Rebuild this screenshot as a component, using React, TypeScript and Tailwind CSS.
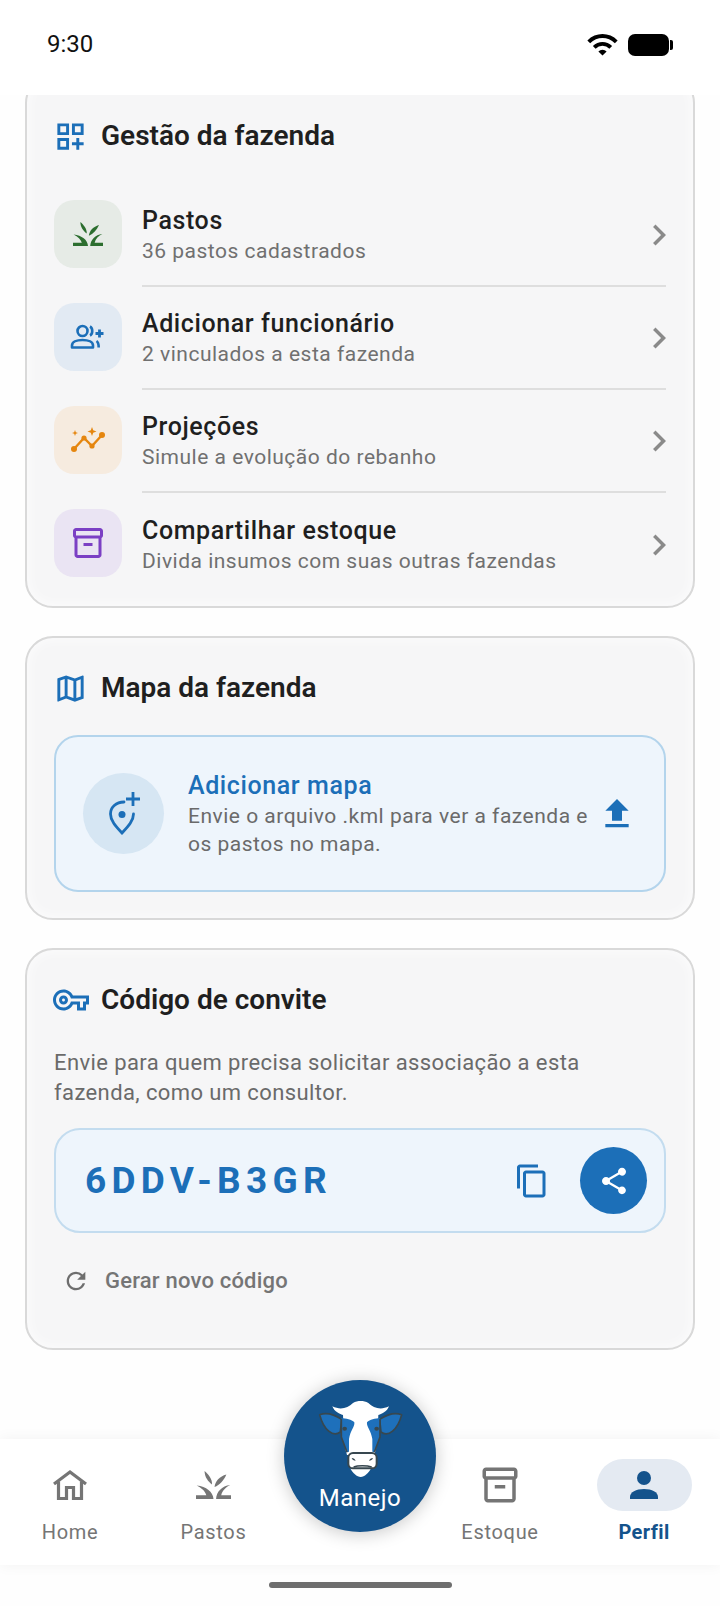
import React from 'react';
import {
  MdChevronRight,
  MdContentCopy,
  MdFileUpload,
  MdOutlineDashboardCustomize,
  MdOutlineInventory2,
  MdOutlineMap,
  MdOutlineVpnKey,
  MdRefresh,
  MdShare,
  MdWifi,
} from 'react-icons/md';

function GrassIcon({ className }: { className?: string }) {
  return (
    <svg viewBox="0 0 34 27" className={className} fill="currentColor">
      <path d="M8.300 0C12 3 16 8 15.500 13 11.500 10 8.500 6 8.300 0z" />
      <path d="M29.500 3.300C23 5 18.500 10 18 15.500 23 13.500 27 9 29.500 3.300z" />
      <path d="M.7 14C10 15 16.500 20 17 27H0v-3.500h10C9 19.500 5.500 16.500.7 14z" />
      <path d="M33.300 13.500C25 14.500 20 20 19.500 27H34v-3.500h-9.500c1-4.500 4.500-8 8.800-10z" />
    </svg>
  );
}

function PersonAddIcon({ className }: { className?: string }) {
  return (
    <svg viewBox="0 0 36 26" className={className} fill="none" stroke="currentColor" strokeWidth="2.600">
      <circle cx="12.500" cy="7" r="5" />
      <path d="M2 23.500v-2c0-3.500 4.500-5.500 10.500-5.500s10.500 2 10.500 5.500v2z" strokeLinejoin="round" />
      <path d="M20 2.500c3 1.500 3 7.500 0 9M26.500 17c1.500 1 2.200 2.500 2.200 6.500" />
      <path d="M29.500 5.500v8M25.500 9.500h8" strokeWidth="2.800" />
    </svg>
  );
}

function ProjectionIcon({ className }: { className?: string }) {
  return (
    <svg viewBox="0 0 34 26" className={className} fill="currentColor">
      <path d="M3 22L13 11l8 8L31 8" fill="none" stroke="currentColor" strokeWidth="2.400" />
      <circle cx="3" cy="22" r="3" />
      <circle cx="13" cy="11" r="2.600" />
      <circle cx="21" cy="19" r="2.600" />
      <circle cx="31" cy="8" r="3" />
      <path d="M4 3l.8 2.200L7 6l-2.200.8L4 9l-.8-2.200L1 6l2.200-.8z" />
      <path d="M21 0l1.200 3.300L25.500 4.500 22.200 5.700 21 9l-1.200-3.300L16.500 4.500l3.300-1.200z" />
    </svg>
  );
}

function MapPinAddIcon({ className }: { className?: string }) {
  return (
    <svg viewBox="0 0 34 46" className={className} fill="none" stroke="currentColor" strokeWidth="2.800">
      <path d="M16 11C8 11 2.500 16.500 2.500 23c0 7 6 13 11.500 19 5.500-6 11.500-12 11.500-19" strokeLinecap="round" />
      <circle cx="14" cy="23.500" r="3.500" fill="currentColor" stroke="none" />
      <path d="M25 1v14M18 8h14" />
    </svg>
  );
}

function HomeIcon({ className }: { className?: string }) {
  return (
    <svg viewBox="0 0 34 30" className={className} fill="none" stroke="currentColor" strokeWidth="3.200">
      <path d="M1 14L17 2l16 12" />
      <path d="M5.500 11.500V28.500h8V17.500h7V28.500h8V11.500" />
    </svg>
  );
}

function PersonIcon({ className }: { className?: string }) {
  return (
    <svg viewBox="0 0 28 28" className={className} fill="currentColor">
      <circle cx="14" cy="7" r="7" />
      <path d="M0 28v-2c0-5 6-8 14-8s14 3 14 8v2z" />
    </svg>
  );
}

function CowIcon({ className }: { className?: string }) {
  return (
    <svg viewBox="175 118 255 240" className={className}>
      <path d="M180 165c22-8 48 2 66 14l-4 38c-22 16-50-6-62-52z" fill="#1e70bb" stroke="#37474f" strokeWidth="5" strokeLinejoin="round" />
      <path d="M426 165c-22-8-48 2-66 14l4 38c22 16 50-6 62-52z" fill="#1e70bb" stroke="#37474f" strokeWidth="5" strokeLinejoin="round" />
      <path d="M218 140c24 12 46 6 62-10 14-8 32-8 46 0 16 16 38 22 62 10-6 16-20 22-32 26l-4 90-8 30H262l-8-30-4-90c-12-4-26-10-32-26z" fill="#fff" />
      <path d="M245 176c14 0 31 4 39 12 2 14-12 24-16 50v38l-6 2-17-46z" fill="#1e70bb" />
      <path d="M361 176c-14 0-31 4-39 12-2 14 12 24 16 50v38l6 2 17-46z" fill="#1e70bb" />
      <path d="M245 178v54l17 46" fill="none" stroke="#37474f" strokeWidth="5" />
      <path d="M361 178v54l-17 46" fill="none" stroke="#37474f" strokeWidth="5" />
      <ellipse cx="255" cy="207" rx="7" ry="6" fill="#37474f" />
      <ellipse cx="351" cy="207" rx="7" ry="6" fill="#37474f" />
      <path d="M272 326c6 14 20 26 31 26s25-12 31-26z" fill="#fff" />
      <rect x="266" y="280" width="85" height="46" rx="14" fill="#fff" stroke="#37474f" strokeWidth="6" />
      <path d="M276 295c6 0 10 4 12 8-6 0-10-2-12-8zM340 295c-6 0-10 4-12 8 6 0 10-2 12-8z" fill="#37474f" />
      <path d="M282 322c12-5 40-5 54 0" fill="none" stroke="#37474f" strokeWidth="5" />
    </svg>
  );
}

const rows = [
  { title: 'Pastos', sub: '36 pastos cadastrados', tile: 'bg-[#e6ebe6]', icon: <GrassIcon className="h-[24px] w-[30px] text-[#2c6e2f]" /> },
  { title: 'Adicionar funcionário', sub: '2 vinculados a esta fazenda', tile: 'bg-[#e2eaf3]', icon: <PersonAddIcon className="h-[26px] w-[36px] text-[#1c6fb8]" /> },
  { title: 'Projeções', sub: 'Simule a evolução do rebanho', tile: 'bg-[#f6ebdf]', icon: <ProjectionIcon className="h-[26px] w-[34px] text-[#e5860f]" /> },
  { title: 'Compartilhar estoque', sub: 'Divida insumos com suas outras fazendas', tile: 'bg-[#eae4f3]', icon: <MdOutlineInventory2 className="h-[36px] w-[36px] text-[#7b3fc4]" /> },
];

function CardTitle({ icon, title }: { icon: React.ReactNode; title: string }) {
  return (
    <div className="flex h-[32px] items-center">
      <div className="flex w-[47px] shrink-0 items-center">{icon}</div>
      <span className="text-[28px] font-semibold leading-[32px] text-[#1f1f1f]">{title}</span>
    </div>
  );
}

function NavItem({ label, icon }: { label: string; icon: React.ReactNode }) {
  return (
    <div className="flex flex-col items-center text-[#757575]">
      <div className="flex h-[52px] items-center justify-center">{icon}</div>
      <span className="mt-[5px] text-[20px] leading-[32px] tracking-[0.7px]">{label}</span>
    </div>
  );
}

export default function App() {
  return (
    <div className="relative flex h-[1606px] w-[720px] flex-col overflow-hidden bg-white font-['Roboto',sans-serif]">
      {/* status bar */}
      <div className="flex h-[95px] shrink-0 items-start justify-between pl-[47px] pr-[47px] pt-[28px]">
        <span className="text-[24px] leading-[32px] text-[#111]">9:30</span>
        <div className="flex items-center gap-[9px]">
          <MdWifi className="h-[33px] w-[33px] text-black" />
          <div className="flex items-center">
            <div className="h-[22px] w-[41px] rounded-[7px] bg-black" />
            <div className="ml-[1px] h-[10px] w-[3px] rounded-r-[2px] bg-black" />
          </div>
        </div>
      </div>

      {/* scroll area */}
      <div className="flex min-h-0 flex-1 flex-col gap-[28px] overflow-hidden bg-[#fefefe] px-[25px]">
        <section className="-mt-[20px] shrink-0 rounded-[28px] border-2 border-[#d9d9d9] bg-[#f6f6f7] px-[27px] pb-[10px] pt-[43px] shadow-[inset_0_0_14px_rgba(255,255,255,0.8)]">
          <CardTitle icon={<MdOutlineDashboardCustomize className="h-[35px] w-[35px] -ml-[1px] text-[#1c6fb8]" />} title="Gestão da fazenda" />
          <div className="mt-[32px] flex flex-col">
            {rows.map((r, i) => (
              <div key={r.title} className="flex items-stretch">
                <div className="flex w-[88px] shrink-0 items-center">
                  <div className={`-mt-[3px] flex h-[68px] w-[68px] items-center justify-center rounded-[20px] ${r.tile}`}>{r.icon}</div>
                </div>
                <div className={`flex h-[103px] flex-1 items-center justify-between ${i < rows.length - 1 ? 'border-b-2 border-[#dedede]' : ''}`}>
                  <div className="flex flex-col">
                    <span className="text-[25px] font-medium leading-[32px] tracking-[0.6px] text-[#1f1f1f]">{r.title}</span>
                    <span className="text-[21px] leading-[28px] tracking-[0.5px] text-[#707070]">{r.sub}</span>
                  </div>
                  <MdChevronRight className="-mr-[14px] h-[42px] w-[42px] text-[#8a8a8a]" />
                </div>
              </div>
            ))}
          </div>
        </section>

        <section className="shrink-0 rounded-[28px] border-2 border-[#d9d9d9] bg-[#f6f6f7] px-[27px] pb-[26px] pt-[34px] shadow-[inset_0_0_14px_rgba(255,255,255,0.8)]">
          <CardTitle icon={<MdOutlineMap className="h-[35px] w-[35px] -ml-[1px] text-[#1c6fb8]" />} title="Mapa da fazenda" />
          <div className="mt-[31px] flex h-[157px] items-center rounded-[24px] border-2 border-[#b3d4ec] bg-[#eef5fc] pl-[27px] pr-[27px]">
            <div className="flex h-[81px] w-[81px] shrink-0 items-center justify-center rounded-full bg-[#d6e6f3]">
              <MapPinAddIcon className="ml-[3px] h-[46px] w-[34px] text-[#1c6fb8]" />
            </div>
            <div className="ml-[24px] flex-1">
              <div className="text-[25px] font-medium leading-[32px] tracking-[0.6px] text-[#1c6fb8]">Adicionar mapa</div>
              <div className="text-[21px] leading-[28px] tracking-[0.5px] text-[#6a6a6a]">
                Envie o arquivo .kml para ver a fazenda e os pastos no mapa.
              </div>
            </div>
            <MdFileUpload className="h-[40px] w-[40px] shrink-0 text-[#1c6fb8]" />
          </div>
        </section>

        <section className="flex-none rounded-[28px] border-2 border-[#d9d9d9] bg-[#f6f6f7] px-[27px] pb-[49px] pt-[34px] shadow-[inset_0_0_14px_rgba(255,255,255,0.8)]">
          <CardTitle icon={<MdOutlineVpnKey className="h-[36px] w-[36px] -ml-[1px] text-[#1c6fb8]" />} title="Código de convite" />
          <p className="mt-[32px] text-[22px] leading-[30px] tracking-[0.4px] text-[#6a6a6a]">
            Envie para quem precisa solicitar associação a esta fazenda, como um consultor.
          </p>
          <div className="mt-[20px] flex h-[105px] items-center justify-between rounded-[26px] border-2 border-[#c3dcef] bg-[#eef5fc] pl-[29px] pr-[17px]">
            <span className="text-[37px] font-bold leading-[44px] tracking-[5.300px] text-[#1c6fb8]">6DDV-B3GR</span>
            <div className="flex items-center gap-[30px]">
              <MdContentCopy className="h-[36px] w-[36px] text-[#1c6fb8]" />
              <div className="flex h-[67px] w-[67px] items-center justify-center rounded-full bg-[#1c6fb8]">
                <MdShare className="h-[32px] w-[32px] text-white" />
              </div>
            </div>
          </div>
          <div className="mt-[30px] flex items-center pl-[8px] text-[#757575]">
            <MdRefresh className="h-[28px] w-[28px] text-[#6e6e6e]" />
            <span className="ml-[15px] text-[22px] font-medium leading-[36px] tracking-[0.2px]">Gerar novo código</span>
          </div>
        </section>
      </div>

      {/* bottom nav */}
      <div className="absolute bottom-[41px] left-0 right-0 grid h-[126px] grid-cols-[140px_147px_145px_136px_152px] bg-white pt-[20px] shadow-[0_0_14px_rgba(0,0,0,0.05)]">
        <NavItem label="Home" icon={<HomeIcon className="h-[30px] w-[34px]" />} />
        <NavItem label="Pastos" icon={<GrassIcon className="h-[28px] w-[35px]" />} />
        <div />
        <NavItem label="Estoque" icon={<MdOutlineInventory2 className="h-[42px] w-[42px]" />} />
        <div className="flex flex-col items-center text-[#14538c]">
          <div className="flex h-[52px] w-[95px] items-center justify-center rounded-[26px] bg-[#e4eaf2]">
            <PersonIcon className="h-[28px] w-[28px]" />
          </div>
          <span className="mt-[5px] text-[20px] font-bold leading-[32px] tracking-[0.4px]">Perfil</span>
        </div>
      </div>

      {/* manejo button */}
      <div className="absolute left-[284px] top-[1380px] flex h-[152px] w-[152px] flex-col items-center rounded-full bg-[#14538c] pt-[19px] shadow-[0_2px_18px_rgba(0,0,0,0.22)]">
        <CowIcon className="h-[80px] w-[85px]" />
        <span className="mt-[4px] text-[24px] leading-[30px] tracking-[0.5px] text-white">Manejo</span>
      </div>

      {/* home indicator */}
      <div className="absolute bottom-[18px] left-[269px] h-[6px] w-[183px] rounded-full bg-[#6e6e6e]" />
    </div>
  );
}
